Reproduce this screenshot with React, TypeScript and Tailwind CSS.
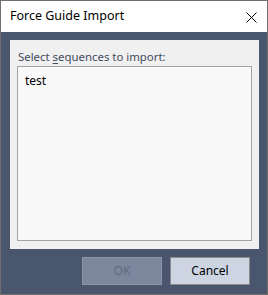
import React from 'react';

const ForceGuideImport = () => {
  return (
    <div className="w-[268px] h-[295px] flex flex-col border border-[#6f6f6f] bg-[#4a566e] font-['Noto_Sans','Open_Sans',sans-serif] text-[12px]">
      <div className="h-[31px] shrink-0 flex items-center justify-between bg-white pl-[9px] pr-[10px]">
        <span className="text-[12.5px] text-black">Force Guide Import</span>
        <svg width="11" height="11" viewBox="0 0 11 11" className="text-black mt-[1px]">
          <path d="M0.5 0.5 L10.5 10.5 M10.5 0.5 L0.5 10.5" stroke="currentColor" strokeWidth="1" />
        </svg>
      </div>

      <div className="flex-1 flex flex-col pt-[8px] pl-[9px] pr-[8px] pb-[7px]">
        <div className="h-[209px] bg-[#f0f0f0] px-[7px] pt-[8px] pb-[8px] flex flex-col">
          <div className="h-[18px] leading-[18px] pl-[1px] text-[11.4px] text-[#3e4a5c]">
            Select <span className="underline underline-offset-2">s</span>equences to import:
          </div>
          <div className="flex-1 bg-[#f9f9f9] border border-[#a3a3a3] px-[7px] pt-[6px] text-black leading-[16px]">
            test
          </div>
        </div>

        <div className="flex justify-end gap-[8px] mt-[8px] pr-[9px]">
          <button className="w-[80px] h-[28px] bg-[#7c879d] border border-[#8e97a8] text-[#5e6a80] text-[12px]">
            OK
          </button>
          <button className="w-[80px] h-[28px] bg-[#cdd5e3] border border-[#8a8a8a] text-black text-[12px]">
            Cancel
          </button>
        </div>
      </div>
    </div>
  );
};

export default function App() {
  return <ForceGuideImport />;
}
